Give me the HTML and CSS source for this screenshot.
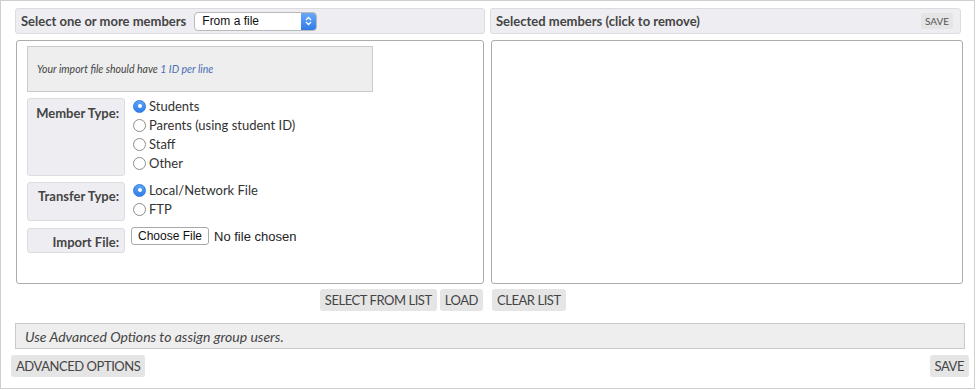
FILE: index.html
```html
<!DOCTYPE html>
<html lang="en">
<head>
<meta charset="UTF-8">
<title>Select members</title>
<link rel="stylesheet" href="styles.css">
</head>
<body>
<div class="page">
  <div class="columns">
    <div class="col col-left">
      <div class="head">
        <span class="head-title">Select one or more members</span>
        <div class="select">
          <span class="select-text">From a file</span>
          <span class="select-arrows">
            <svg width="7" height="10" viewBox="0 0 7 10"><path d="M1 4 L3.5 1.5 L6 4 M1 6 L3.5 8.5 L6 6" fill="none" stroke="#fff" stroke-width="1.3"/></svg>
          </span>
        </div>
      </div>
      <div class="panel">
        <div class="note">Your import file should have&nbsp;<a href="#">1 ID per line</a></div>
        <div class="row row-member">
          <div class="row-label">Member Type:</div>
          <div class="options">
            <label class="opt"><span class="radio on"></span>Students</label>
            <label class="opt"><span class="radio"></span>Parents (using student ID)</label>
            <label class="opt"><span class="radio"></span>Staff</label>
            <label class="opt"><span class="radio"></span>Other</label>
          </div>
        </div>
        <div class="row row-transfer">
          <div class="row-label">Transfer Type:</div>
          <div class="options">
            <label class="opt"><span class="radio on"></span>Local/Network File</label>
            <label class="opt"><span class="radio"></span>FTP</label>
          </div>
        </div>
        <div class="row row-file">
          <div class="row-label">Import File:</div>
          <div class="file">
            <span class="file-btn">Choose File</span>
            <span class="file-name">No file chosen</span>
          </div>
        </div>
      </div>
      <div class="actions actions-left">
        <span class="btn">SELECT FROM LIST</span>
        <span class="btn">LOAD</span>
      </div>
    </div>
    <div class="col col-right">
      <div class="head head-right">
        <span class="head-title">Selected members (click to remove)</span>
        <span class="btn-small">SAVE</span>
      </div>
      <div class="panel panel-right"></div>
      <div class="actions">
        <span class="btn">CLEAR LIST</span>
      </div>
    </div>
  </div>
  <div class="info-bar">Use Advanced Options to assign group users.</div>
  <div class="bottom">
    <span class="btn">ADVANCED OPTIONS</span>
    <span class="btn">SAVE</span>
  </div>
</div>
</body>
</html>
```

FILE: styles.css
```css
:root{
  --text:#444;
  --head-bg:#eeeef2;
  --head-border:#dcdce0;
  --btn-bg:#e5e5e5;
}
body{margin:0;font-family:Lato,'Open Sans',Arial,sans-serif;color:var(--text);background:#fff;}
.page{width:975px;height:389px;box-sizing:border-box;border:1px solid #cfcfcf;padding:7px 9px 0 14px;}
.columns{display:flex;gap:5px;}
.col{display:flex;flex-direction:column;}
.col-left{width:470px;}
.col-right{width:475px;}

.head{height:26px;box-sizing:border-box;background:var(--head-bg);border:1px solid var(--head-border);border-radius:3px;display:flex;align-items:center;padding:0 0 0 5px;}
.head-right{width:471px;justify-content:space-between;padding-right:7px;}
.head-title{font-size:13px;font-weight:bold;color:#444;}

.select{margin-left:8px;width:123px;height:19px;box-sizing:border-box;border:1px solid #b9b9b9;border-radius:4px;background:#fff;display:flex;align-items:center;overflow:hidden;font-family:'Liberation Sans',Arial,sans-serif;font-size:12px;color:#111;}
.select-text{flex:1;padding-left:7px;}
.select-arrows{width:15px;height:100%;background:linear-gradient(#6aa9f7,#2f7ae8);display:flex;align-items:center;justify-content:center;}

.panel{margin:6px 1px 0;height:244px;box-sizing:border-box;border:1px solid #acacac;border-radius:3px;padding:5px 10px;}
.panel-right{width:472px;margin-right:0;}

.note{width:346px;height:46px;box-sizing:border-box;background:#eee;border:1px solid #cbcbcb;display:flex;align-items:center;padding:0 9px;font-size:10.5px;font-style:italic;color:#444;}
.note a{color:#4a6db5;text-decoration:none;}

.row{display:flex;margin-top:6px;}
.row-member{height:78px;}
.row-transfer{height:39px;}
.row-file{height:25px;margin-top:7px;}
.row-label{width:98px;flex:none;box-sizing:border-box;background:var(--head-bg);border:1px solid var(--head-border);border-radius:3px;text-align:right;padding:5px 5px 0 0;font-size:13px;font-weight:bold;line-height:18px;}
.row-transfer .row-label{padding-top:4px;}
.row-file .row-label{padding-top:4px;}
.options{margin-top:-2px;padding-left:8px;display:flex;flex-direction:column;}
.opt{display:flex;align-items:center;height:19px;font-size:13px;color:#333;}
.radio{width:13px;height:13px;box-sizing:border-box;border:1px solid #8d8d8d;border-radius:50%;background:#fff;margin-right:3px;margin-top:1px;display:flex;align-items:center;justify-content:center;}
.radio.on{border-color:#2c7be5;background:linear-gradient(#5ea3f6,#2f7de8);}
.radio.on::after{content:'';width:4px;height:4px;border-radius:50%;background:#fff;}

.file{display:flex;align-items:center;padding-left:6px;height:18px;margin-top:-1px;font-family:'Liberation Sans',Arial,sans-serif;font-size:13px;color:#222;}
.file-btn{height:18px;box-sizing:border-box;border:1px solid #a9a9a9;border-radius:3px;padding:0 6px;font-size:12px;display:flex;align-items:center;background:#fff;color:#111;margin-right:5px;}

.actions{display:flex;gap:3px;margin-top:5px;padding:0 2px;}
.actions-left{justify-content:flex-end;}
.btn{height:22px;box-sizing:border-box;background:var(--btn-bg);border-radius:3px;padding:0 5px;display:flex;align-items:center;font-size:13px;letter-spacing:-0.45px;color:#444;}
.btn-small{height:16px;background:var(--btn-bg);border-radius:2px;padding:0 4px;display:flex;align-items:center;font-size:10px;color:#555;}

.info-bar{margin-top:12px;height:26px;box-sizing:border-box;background:#eee;border:1px solid #cbcbcb;display:flex;align-items:center;padding-left:9px;font-size:14px;font-style:italic;color:#444;}
.bottom{display:flex;justify-content:space-between;margin:6px -4px 0;}
```
